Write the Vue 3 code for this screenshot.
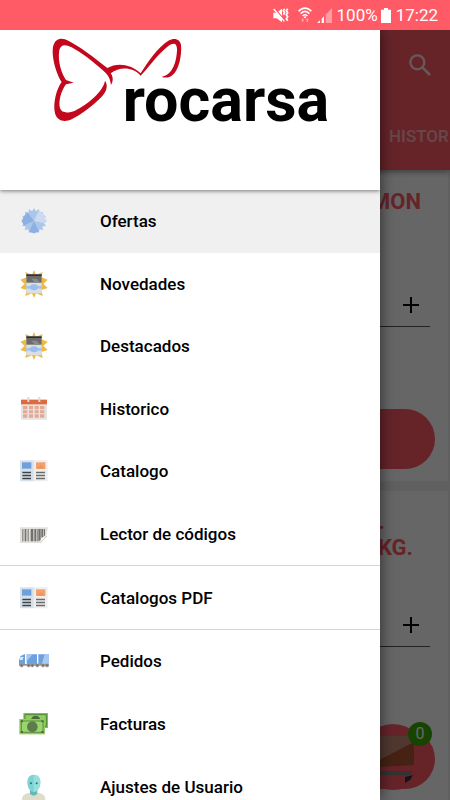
<template>
  <div class="app">
    <svg class="sprite" aria-hidden="true">
      <symbol id="icon-offers" viewBox="0 0 84 84">
        <polygon :points="badgePoints" fill="#aac6ea" />
        <path d="M42 42 L22 16 L12 28 L5 42 L12 56 L22 50Z" fill="#8db0e2" />
        <path d="M42 42 L57 10 L72 22 L79 42 L69 48Z" fill="#cbdbf1" />
        <path d="M42 42 L27 75 L42 79 L57 74Z" fill="#8db0e2" />
      </symbol>
      <symbol id="icon-new" viewBox="0 0 84 84">
        <polygon points="42,0 48,14 68,6 64,22 83,29 70,42 83,54 64,60 68,78 48,70 42,84 36,70 16,78 20,60 1,54 14,42 1,29 20,22 16,6 36,14" fill="#f0b840" />
        <path d="M19 14h46v56H19z" fill="#dcdedf" />
        <path d="M19 14h46v24H19z" fill="#6b6b6b" />
        <path d="M34 26h16l11 12H45z" fill="#8a8a8a" />
        <path d="M19 13h46v5H19z" fill="#303030" />
        <path d="M19 48h46v8H19z" fill="#a3c3f0" />
        <ellipse cx="42" cy="52" rx="12" ry="9" fill="#9bbdee" />
      </symbol>
      <symbol id="icon-history" viewBox="0 0 84 84">
        <rect x="3" y="14" width="78" height="60" rx="2" fill="#e4e4e2" />
        <path d="M3 14h78v14H3z" fill="#e06a3f" />
        <path d="M22 6h6v15h-6zM55 6h6v15h-6z" fill="#d9dcdf" />
        <path d="M9 33h13v10H9zM27 33h12v10H27zM44 33h12v10H44zM60 33h13v10H60zM9 46h13v9H9zM27 46h12v9H27zM44 46h12v9H44zM60 46h13v9H60zM9 58h13v10H9zM27 58h12v10H27zM44 58h12v10H44zM60 58h13v10H60z" fill="#e5a893" />
      </symbol>
      <symbol id="icon-catalog" viewBox="0 0 84 84">
        <rect x="0" y="10" width="42" height="63" rx="3" fill="#d6e0ea" />
        <rect x="41" y="10" width="42" height="63" rx="3" fill="#eeeeee" />
        <path d="M6 16h28v19H6z" fill="#6ea0dc" />
        <path d="M48 16h28v19H48z" fill="#f4a06a" />
        <path d="M62 24l14 11H48z" fill="#ee935b" />
        <path d="M7 44h26v5H7zM7 53h26v5H7zM7 62h26v5H7z" fill="#3f4245" />
        <path d="M48 44h27v5H48zM48 53h27v5H48zM48 62h27v5H48z" fill="#6a6a68" />
      </symbol>
      <symbol id="icon-barcode" viewBox="0 0 84 84">
        <path d="M0 22h84L78 50 62 69H0z" fill="#e0e0dc" />
        <path d="M7 27h3v37H7zM14 27h5v37h-5zM23 27h3v37h-3zM32 27h8v37h-8zM43 27h6v37h-6zM51 27h2v37h-2zM55 27h7v33l-7 4zM64 27h6v26h-6zM72 27h3v20h-3z" fill="#73706d" />
        <path d="M61 68l3-15 17-5z" fill="#f5f5f3" />
        <path d="M61 69l20-21" stroke="#bdbdb9" stroke-width="2" />
      </symbol>
      <symbol id="icon-orders" viewBox="0 0 84 84" overflow="visible">
        <path d="M2 27l13-6v34H-3V39z" fill="#6d9fdc" />
        <path d="M2 30h9l-4 9h-8z" fill="#e3eefb" />
        <path d="M20 22h31v29H20zM55 22h32v29H55z" fill="#6da0de" />
        <path d="M20 22h18L20 43zM74 22h13v29H65z" fill="#a8c9ef" />
        <path d="M-3 51h90v5H-3z" fill="#909090" />
        <g fill="#777370" stroke="#a9a5a1" stroke-width="2">
          <circle cx="5" cy="55" r="5" /><circle cx="26" cy="55" r="5" /><circle cx="37" cy="55" r="5" />
          <circle cx="52" cy="55" r="5" /><circle cx="69" cy="55" r="5" /><circle cx="81" cy="55" r="5" />
        </g>
      </symbol>
      <symbol id="icon-invoices" viewBox="0 0 84 84" overflow="visible">
        <path d="M10 9h74v45H10z" fill="#7fbf52" />
        <path d="M15 14h64v35H15z" fill="#91cc65" stroke="#4c8a35" stroke-width="3" />
        <ellipse cx="47" cy="31" rx="14" ry="14" fill="#4e6b3c" />
        <path d="M-2 27h77v46H-2z" fill="#8ecb60" />
        <path d="M4 33h65v34H4z" fill="#9ad46e" stroke="#5c8e43" stroke-width="3" />
        <circle cx="37" cy="50" r="16" fill="#5d7b4b" />
        <path d="M2 31h7v6H2zM64 31h7v6h-7zM2 63h7v6H2zM64 63h7v6h-7z" fill="#4d6e3b" />
      </symbol>
      <symbol id="icon-user" viewBox="0 0 84 84">
        <path d="M6 81c0-15 8-19 23-22h24c15 3 23 7 23 22z" fill="#dedccb" />
        <path d="M30 50h22v12c-6 7-16 7-22 0z" fill="#63b9ba" />
        <path d="M41 5c13 0 20 9 20 23 0 16-9 29-20 29S22 44 22 28C22 14 29 5 41 5z" fill="#7dd3d2" />
        <path d="M41 5c13 0 20 9 20 23 0 16-9 29-20 29z" fill="#96dfdf" />
        <circle cx="33" cy="31" r="3" fill="#35696d" />
        <circle cx="50" cy="31" r="3" fill="#35696d" />
      </symbol>
    </svg>

    <header class="status-bar">
      <svg class="status-mute" viewBox="0 0 48 45" aria-hidden="true">
        <path d="M1 14h10L27 2v41L11 31H1z" fill="#fff" />
        <path d="M6 3l30 34" stroke="#ff5b66" stroke-width="4" />
        <path d="M2 3l32 37" stroke="#fff" stroke-width="4" />
        <path d="M35 2l-4 6 4 6-4 6M44 2l-4 6 4 6-4 6 4 6-4 6 4 6" fill="none" stroke="#fff" stroke-width="5" />
      </svg>
      <svg class="status-wifi" viewBox="0 0 42 48" aria-hidden="true">
        <g fill="none" stroke="#fff" stroke-width="5">
          <path d="M2 13c11-13 27-13 38 0M8 20c8-9 18-9 26 0M14 27c4-5 10-5 14 0" />
        </g>
        <circle cx="21" cy="31" r="3" fill="#fff" />
        <path d="M14 45l-5-6h3v-5h4v5h3zM28 33l5 6h-3v6h-4v-6h-3z" fill="#ffa5ab" />
      </svg>
      <svg class="status-signal" viewBox="0 0 45 45" aria-hidden="true">
        <path d="M0 45h9v-8zM14 45h7V25l-7 7z" fill="#fff" />
        <path d="M26 45h19V0L26 20z" fill="#ff9da3" />
      </svg>
      <span class="status-percent">100%</span>
      <svg class="status-battery" viewBox="0 0 30 45" aria-hidden="true">
        <path d="M9 0h12v5h9v40H0V5h9z" fill="#fff" />
      </svg>
      <time>17:22</time>
    </header>

    <div class="stage">
      <main class="shop">
        <div class="toolbar">
          <button type="button" class="search-button" aria-label="Buscar">
            <svg viewBox="0 0 66 66" aria-hidden="true">
              <circle cx="25" cy="25" r="21" fill="none" stroke="currentColor" stroke-width="7" />
              <path d="M41 41l22 22" stroke="currentColor" stroke-width="8" />
            </svg>
          </button>
          <nav class="tabs"><a href="#historico">HISTOR</a></nav>
        </div>
        <article v-for="product in products" :key="product.id" class="product">
          <h2><span v-for="line in product.title" :key="line">{{ line }}</span></h2>
          <div class="quantity">
            <input type="text" :aria-label="'Cantidad ' + product.id" />
            <button type="button" aria-label="Sumar">
              <svg viewBox="0 0 16 16" aria-hidden="true"><path d="M8 0v16M0 8h16" stroke="#000" stroke-width="2" /></svg>
            </button>
          </div>
          <button type="button" class="add-button" aria-label="Añadir"></button>
        </article>

        <button type="button" class="cart" aria-label="Carrito">
          <svg viewBox="0 0 66 66" aria-hidden="true">
            <path d="M4 12h50v6L4 44z" fill="#c88d78" />
            <path d="M4 44l50-26v23L4 44z" fill="#ad5634" />
            <path d="M4 47h49l-4 4H4z" fill="#808080" />
            <path d="M45 53l8-2-3 5-5 3z" fill="#303044" />
          </svg>
          <span class="cart-count">0</span>
        </button>
      </main>

      <div class="scrim"></div>

      <aside class="drawer">
        <div class="brand">
          <svg viewBox="0 0 960 330" role="img" aria-label="rocarsa">
            <path d="M95 156C72 120 62 60 72 42C80 22 100 24 115 32C150 50 190 80 232 114C260 98 300 100 332 130C350 100 385 50 415 32C435 22 450 28 453 45C456 80 445 130 420 140C410 144 400 143 395 140C430 135 440 90 441 60C441 38 430 38 415 48C385 70 350 120 332 137C310 112 270 108 242 130C250 140 250 155 243 165C240 145 235 137 225 127C190 95 150 65 125 52C105 42 92 44 88 60C82 95 95 130 108 150L131 158L108 163C92 185 85 215 90 235C95 250 115 250 135 242C170 225 220 185 225 152C235 165 230 185 215 200C185 230 150 255 125 268C105 277 82 275 75 250C68 220 80 175 95 156Z" fill="#c3071c" />
            <text x="278" y="274">rocarsa</text>
          </svg>
        </div>
        <nav class="menu">
          <ul v-for="(group, index) in menu" :key="index">
            <li v-for="item in group" :key="item.label">
              <a :href="'#' + item.icon" :class="{ active: item.label === current }" @click.prevent="current = item.label">
                <svg class="menu-icon" aria-hidden="true"><use :href="'#icon-' + item.icon" /></svg>
                <span>{{ item.label }}</span>
              </a>
            </li>
          </ul>
        </nav>
      </aside>
    </div>
  </div>
</template>

<script setup>
import { ref } from 'vue'

const current = ref('Ofertas')

const menu = [
  [
    { label: 'Ofertas', icon: 'offers' },
    { label: 'Novedades', icon: 'new' },
    { label: 'Destacados', icon: 'new' },
    { label: 'Historico', icon: 'history' },
    { label: 'Catalogo', icon: 'catalog' },
    { label: 'Lector de códigos', icon: 'barcode' }
  ],
  [{ label: 'Catalogos PDF', icon: 'catalog' }],
  [
    { label: 'Pedidos', icon: 'orders' },
    { label: 'Facturas', icon: 'invoices' },
    { label: 'Ajustes de Usuario', icon: 'user' }
  ]
]

const products = [
  { id: 1, title: ['MON'] },
  { id: 2, title: ['.', 'KG.'] }
]

// 16-pointed badge
const badgePoints = Array.from({ length: 32 }, (_, i) => {
  const radius = i % 2 ? 30 : 39
  const angle = (i * Math.PI) / 16
  return `${42 + radius * Math.sin(angle)},${42 - radius * Math.cos(angle)}`
}).join(' ')
</script>

<style>
body { margin: 0; }
</style>

<style scoped>
.app {
  display: flex;
  flex-direction: column;
  height: 100vh;
  overflow: hidden;
  color: #000;
  background: #ffffff;
  font-family: Roboto, "Noto Sans", sans-serif;
}

button { padding: 0; border: 0; background: none; font: inherit; cursor: pointer; }
a { color: inherit; text-decoration: none; }
.sprite { position: absolute; width: 0; height: 0; }

.status-bar { flex: none; display: flex; align-items: center; justify-content: flex-end; gap: 5px; height: 30px; padding-right: 12px; color: #fff; background: #ff5b66; font-size: 17px; line-height: 30px; }
.status-mute { width: 16px; height: 15px; margin-right: 4px; }
.status-wifi { width: 14px; height: 16px; }
.status-signal { width: 15px; height: 15px; }
.status-percent { margin-right: -2px; }
.status-battery { width: 10px; height: 15px; }

.stage { position: relative; flex: 1; min-height: 0; overflow: hidden; }
.shop { height: 100%; overflow: hidden; background: #f0f0f0; }
.toolbar { position: relative; display: flex; flex-direction: column; align-items: flex-end; height: 140px; color: #fff; background: #ff5b66; box-shadow: 0 2px 6px rgba(0, 0, 0, .4); }
.search-button { width: 22px; height: 22px; margin: 24px 19px 0 0; color: #fff; opacity: .8; }
.search-button svg { display: block; width: 22px; height: 22px; }
.tabs { align-self: stretch; margin-top: 48px; padding-left: calc(100% - 61px); color: #ffb5ba; font-size: 17px; font-weight: 500; line-height: 24px; white-space: nowrap; }

.product { display: flex; flex-direction: column; align-items: flex-end; box-sizing: border-box; height: 311px; margin: 0 2px 10px 0; padding: 19px 13px 0 0; background: #ffffff; }
.product h2 { display: flex; flex-direction: column; align-items: flex-end; box-sizing: border-box; height: 94px; margin: 0 14px 0 0; color: #ff5b66; font-size: 22px; font-weight: 700; line-height: 26px; }
.product h2 span:first-child:not(:last-child) { padding-right: 28px; }
.product + .product { padding-top: 18px; }
.product + .product h2 { margin-right: 22px; }
.quantity { display: flex; align-items: center; align-self: stretch; height: 43px; margin-right: 5px; padding-right: 11px; border-bottom: 1px solid #555; }
.quantity input { flex: 1; min-width: 0; border: 0; background: transparent; font: inherit; outline: none; }
.quantity svg { display: block; width: 16px; height: 16px; }
.add-button { width: calc(100% - 15px); height: 60px; margin-top: 82px; border-radius: 30px; background: #ff5b66; }

.cart { position: absolute; right: 24px; bottom: 10px; width: 66px; height: 66px; border-radius: 50%; background: #ff5b66; }
.cart svg { display: block; width: 66px; height: 66px; }
.cart-count { position: absolute; top: -2px; right: -6px; width: 24px; height: 24px; border-radius: 50%; color: #fff; background: #3aab00; font-size: 16px; line-height: 24px; text-align: center; }

.scrim { position: absolute; inset: 0; background: rgba(0, 0, 0, .6); }

.drawer { position: absolute; top: 0; bottom: 0; left: 0; width: calc(100% - 70px); overflow: hidden; background: #fff; box-shadow: 0 0 14px rgba(0, 0, 0, .6); }
.brand { position: relative; box-sizing: border-box; height: 160px; padding-left: 30px; background: #fff; box-shadow: 0 1px 4px rgba(0, 0, 0, .5); }
.brand svg { display: block; width: 320px; height: 110px; }
.brand text { font-family: Roboto, sans-serif; font-size: 183px; font-weight: 700; }

.menu ul { display: grid; grid-auto-rows: 1fr; height: 375px; margin: 0; padding: 0; list-style: none; }
.menu ul:nth-child(2) { height: 63px; }
.menu ul:nth-child(3) { height: 188px; }
.menu ul + ul { border-top: 1px solid #d6d6d6; }
.menu a { display: flex; align-items: center; gap: 52px; height: 100%; padding: 0 20px; box-sizing: border-box; font-size: 17px; font-weight: 500; line-height: 24px; }
.menu a.active { background: #f0f0f0; }
.menu-icon { flex: none; width: 28px; height: 28px; overflow: visible; }
</style>
